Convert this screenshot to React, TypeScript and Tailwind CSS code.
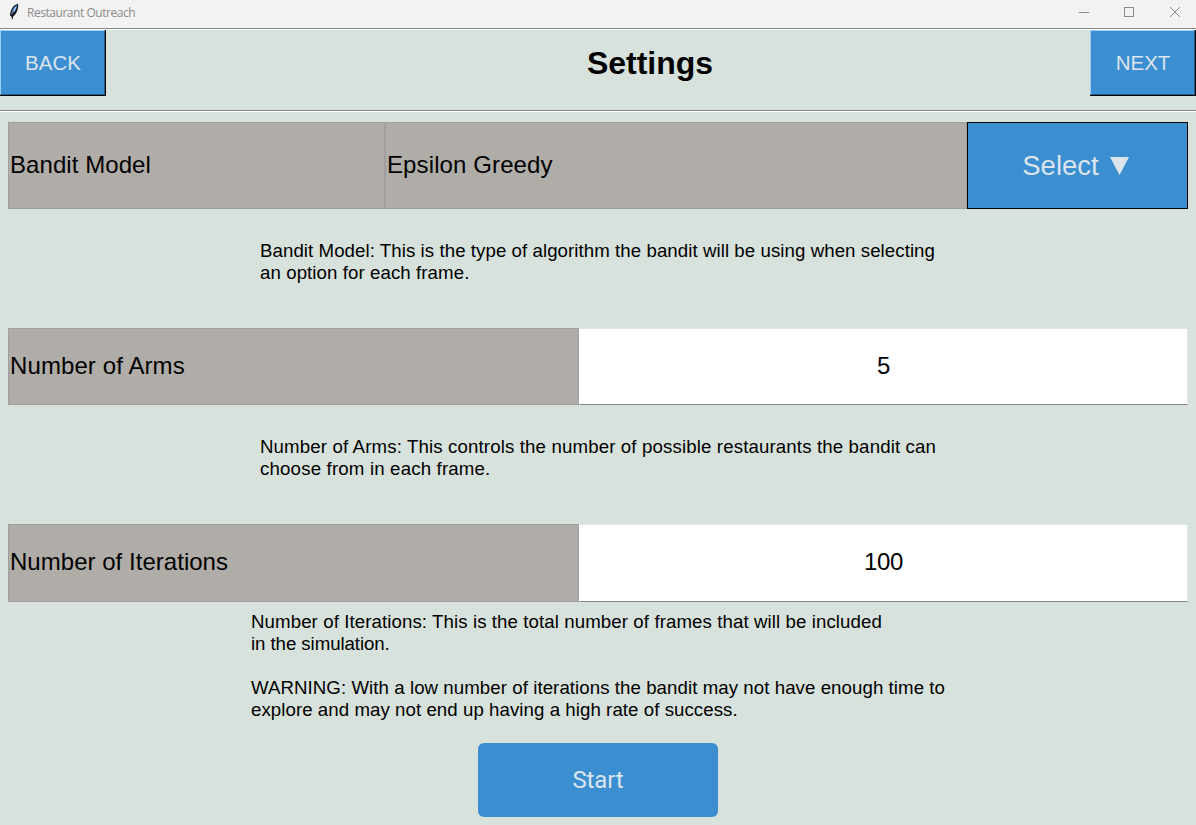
import type { ReactNode } from "react";

function TitleBar() {
  return (
    <header className="flex h-[28px] shrink-0 items-start bg-[#f3f3f3]">
      <svg className="ml-[9px] mt-[3px]" width="11" height="17" viewBox="0 0 11 17">
        <path d="M8.6 .8C4.6 2.2 1.4 6 1 12.2L2.8 14.2C6.6 12.4 9.4 7.6 9.2 1.2Z" fill="#15181f" />
        <path d="M8 2C5.2 3.6 2.7 7 2.3 11.4C5.6 9.4 8 6 8 2Z" fill="#4f90e6" />
        <path d="M7 4L3 11" stroke="#c9defa" strokeWidth="1" />
        <path d="M4.2 8.5L3.2 16.2" stroke="#15181f" strokeWidth="1" />
      </svg>
      <span className="ml-[7px] mt-[4px] whitespace-nowrap font-['Open_Sans',sans-serif] text-[12px] leading-[18px] tracking-[-0.46px] text-[#8c8c8c]">
        Restaurant Outreach
      </span>
      <svg className="ml-auto" width="118" height="28" viewBox="0 0 118 28" fill="none" stroke="#8b8b8b">
        <path d="M1 12.5H11" />
        <rect x="46.5" y="7.5" width="9" height="9" />
        <path d="M92 7L102 17M102 7L92 17" />
      </svg>
    </header>
  );
}

function Rule() {
  return <div className="h-[2px] shrink-0 border-t border-[#858585] bg-white" />;
}

function NavButton({ children }: { children: ReactNode }) {
  return (
    <button className="h-[66px] w-[106px] border-r border-b border-black bg-[#3b8ed0]">
      <span className="flex h-full w-full items-center justify-center border border-t-[#a0ccfb] border-r-[#265d89] border-b-[#265d89] border-l-[#a0ccfb] pl-px text-[20.5px] leading-[24px] text-[#dce4ee]">
        {children}
      </span>
    </button>
  );
}

function LabelCell({ children, className }: { children: string; className: string }) {
  return (
    <div className={`flex items-center border border-[#a0a0a0] bg-[#b0ada8] pb-[2px] pl-px ${className}`}>
      {children}
    </div>
  );
}

function EntryRow({
  label,
  value,
  className,
  labelClass,
}: {
  label: string;
  value: string;
  className: string;
  labelClass: string;
}) {
  return (
    <div className={`flex shrink-0 text-[24px] leading-[28px] ${className}`}>
      <LabelCell className={`w-[571px] ${labelClass}`}>{label}</LabelCell>
      <div className="flex w-[609px] items-center justify-center border border-t-[#e3e3e3] border-r-[#e3e3e3] border-b-[#858585] border-l-white bg-white pb-[2px] tracking-[-0.4px]">
        {value}
      </div>
    </div>
  );
}

function Note({ children, className }: { children: ReactNode; className: string }) {
  return <p className={`text-[18.67px] leading-[22px] whitespace-nowrap ${className}`}>{children}</p>;
}

export default function App() {
  return (
    <div className="flex h-[825px] w-[1196px] flex-col overflow-hidden bg-[#d8e2dc] font-['Liberation_Sans',Arial,sans-serif] text-black">
      <TitleBar />
      <Rule />
      <nav className="flex h-[80px] shrink-0 items-start justify-between">
        <NavButton>BACK</NavButton>
        <h1 className="mt-[15px] ml-[104px] flex-1 text-center text-[32px] leading-[36px] font-bold">Settings</h1>
        <NavButton>NEXT</NavButton>
      </nav>
      <Rule />
      <main className="flex flex-1 flex-col px-[8px] pt-[10px]">
        <div className="flex h-[87px] shrink-0 text-[24px] leading-[28px]">
          <LabelCell className="w-[377px] tracking-[0.07px]">Bandit Model</LabelCell>
          <LabelCell className="w-[582px] tracking-[0.11px]">Epsilon Greedy</LabelCell>
          <button className="flex w-[221px] items-center justify-center gap-[11px] border border-black bg-[#3b8ed0] pr-[4px] text-[27.5px] text-[#dce4ee]">
            Select
            <svg width="19" height="18" viewBox="0 0 19 18" fill="currentColor">
              <path d="M0 0H19L9.5 18Z" />
            </svg>
          </button>
        </div>
        <Note className="mt-[31px] ml-[252px]">
          <span className="block tracking-[0.065px]">
            Bandit Model: This is the type of algorithm the bandit will be using when selecting
          </span>
          <span className="block tracking-[0.08px]">an option for each frame.</span>
        </Note>
        <EntryRow label="Number of Arms" value="5" className="mt-[44px] h-[77px]" labelClass="tracking-[0.1px]" />
        <Note className="mt-[31px] ml-[252px]">
          <span className="block tracking-[0.135px]">
            Number of Arms: This controls the number of possible restaurants the bandit can
          </span>
          <span className="block tracking-[0.17px]">choose from in each frame.</span>
        </Note>
        <EntryRow
          label="Number of Iterations"
          value="100"
          className="mt-[44px] h-[78px]"
          labelClass="tracking-[0.03px]"
        />
        <Note className="mt-[9px] ml-[243px]">
          <span className="block tracking-[0.09px]">
            Number of Iterations: This is the total number of frames that will be included
          </span>
          <span className="block tracking-[-0.07px]">in the simulation.</span>
          <span className="mt-[22px] block tracking-[0.065px]">
            WARNING: With a low number of iterations the bandit may not have enough time to
          </span>
          <span className="block tracking-[0.06px]">explore and may not end up having a high rate of success.</span>
        </Note>
        <button className="mt-[22px] h-[74px] w-[240px] shrink-0 self-center rounded-[6px] bg-[#3b8ed0] font-[Roboto,sans-serif] text-[24px] leading-[28px] tracking-[-0.15px] text-[#dce4ee]">
          Start
        </button>
      </main>
    </div>
  );
}
